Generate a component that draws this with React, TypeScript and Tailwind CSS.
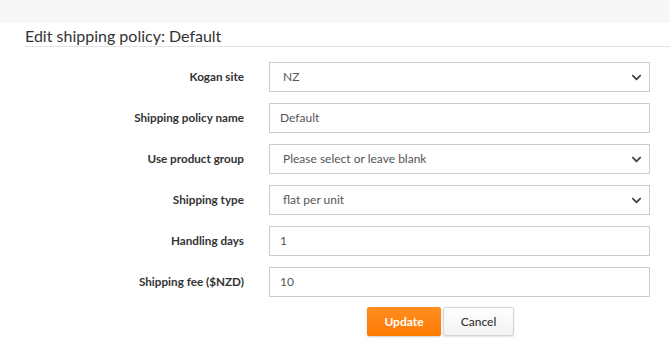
import { FaChevronDown } from "react-icons/fa";

const rows = [
  { label: "Kogan site", value: "NZ", select: true },
  { label: "Shipping policy name", value: "Default" },
  { label: "Use product group", value: "Please select or leave blank", select: true },
  { label: "Shipping type", value: "flat per unit", select: true },
  { label: "Handling days", value: "1" },
  { label: "Shipping fee ($NZD)", value: "10" },
];

const App = () => {
  return (
    <div className="w-[670px] h-[348px] bg-white font-['Lato',sans-serif] overflow-hidden">
      {/* top bar */}
      <div className="h-[23px] bg-[#f7f7f7]" />

      {/* heading */}
      <div className="ml-[25px] border-b border-[#e2e2e2] h-[24px] flex items-center">
        <h1 className="text-[16px] leading-none text-[#333] mt-[2px]">
          Edit shipping policy: Default
        </h1>
      </div>

      {/* form */}
      <div className="mt-[15px] flex flex-col gap-[11px]">
        {rows.map((r) => (
          <div key={r.label} className="flex items-center">
            <label className="w-[244px] shrink-0 text-right text-[11.7px] font-bold text-[#333]">
              {r.label}
            </label>
            <div className="ml-[25px] w-[381px] h-[30px] border border-[#cccccc] bg-white flex items-center justify-between">
              <span className={`text-[12px] text-[#555] ${r.select ? "pl-[13px]" : "pl-[10px]"}`}>
                {r.value}
              </span>
              {r.select && (
                <FaChevronDown className="mr-[7px] text-[#444] w-[11px] h-[11px]" />
              )}
            </div>
          </div>
        ))}
      </div>

      {/* buttons */}
      <div className="mt-[10px] ml-[367px] flex gap-[2px]">
        <button className="w-[74px] h-[29px] rounded-[2px] bg-gradient-to-b from-[#ff8d1f] to-[#ff7b00] text-white text-[12px] font-bold shadow-[0_1px_2px_rgba(0,0,0,0.2)]">
          Update
        </button>
        <button className="w-[71px] h-[29px] rounded-[2px] border border-[#d4d4d4] bg-gradient-to-b from-white to-[#f2f2f2] text-[#333] text-[12px] font-medium shadow-[0_1px_2px_rgba(0,0,0,0.12)]">
          Cancel
        </button>
      </div>
    </div>
  );
};

export default App;
